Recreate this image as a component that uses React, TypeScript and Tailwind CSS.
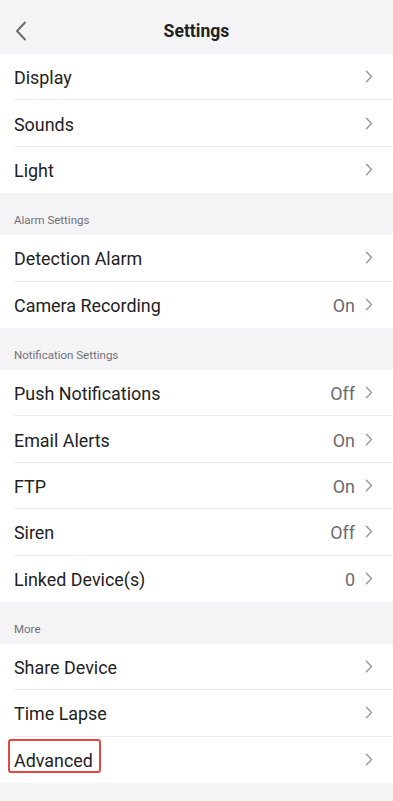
import React from "react";

type Row = { label: string; value?: string; highlight?: boolean };
type Section = { title?: string; rows: Row[] };

const SECTIONS: Section[] = [
  { rows: [{ label: "Display" }, { label: "Sounds" }, { label: "Light" }] },
  {
    title: "Alarm Settings",
    rows: [{ label: "Detection Alarm" }, { label: "Camera Recording", value: "On" }],
  },
  {
    title: "Notification Settings",
    rows: [
      { label: "Push Notifications", value: "Off" },
      { label: "Email Alerts", value: "On" },
      { label: "FTP", value: "On" },
      { label: "Siren", value: "Off" },
      { label: "Linked Device(s)", value: "0" },
    ],
  },
  {
    title: "More",
    rows: [{ label: "Share Device" }, { label: "Time Lapse" }, { label: "Advanced", highlight: true }],
  },
];

function Chevron() {
  return (
    <svg width="8" height="13" viewBox="0 0 8 13" fill="none" className="ml-[10px] -mt-[3px]">
      <path d="M1.5 1.2 L6.5 6.5 L1.5 11.8" stroke="#9a9a9f" strokeWidth="1.5" strokeLinecap="round" strokeLinejoin="round" />
    </svg>
  );
}

export default function App() {
  return (
    <div className="min-h-[801px] w-[393px] bg-[#f4f4f6] text-[#222] font-['Roboto','Liberation_Sans',sans-serif]">
      {/* Header */}
      <div className="relative h-[54px] flex items-center justify-center">
        <svg width="12" height="20" viewBox="0 0 12 20" fill="none" className="absolute left-[15px] top-[21px]">
          <path d="M10 1.5 L2 10 L10 18.5" stroke="#6b6b70" strokeWidth="2" strokeLinecap="round" strokeLinejoin="round" />
        </svg>
        <h1 className="text-[17.6px] font-bold text-[#222] pt-[9px]">Settings</h1>
      </div>

      {SECTIONS.map((section, si) => (
        <div key={si}>
          {section.title && (
            <div className="h-[42px] flex items-end pb-[6px] pl-[14px] text-[11.5px] text-[#707075]">
              {section.title}
            </div>
          )}
          <div className="bg-white">
            {section.rows.map((row, ri) => (
              <div key={row.label} className="pl-[14px]">
                <div
                  className={`h-[46.4px] flex items-center pr-[20px] pt-[3px] ${ri < section.rows.length - 1 ? "border-b border-[#ececee]" : ""}`}
                >
                  <span className="flex-1 text-[17.9px] leading-[24px] text-[#222]">
                    {row.highlight ? (
                      <span className="relative">
                        {row.label}
                        <span className="absolute -left-[6px] -right-[8px] -top-[11px] -bottom-[2px] border-2 border-[#e8473f] rounded-[3px]" />
                      </span>
                    ) : (
                      row.label
                    )}
                  </span>
                  {row.value && <span className="text-[17.9px] leading-[24px] text-[#6a6a6f]">{row.value}</span>}
                  <Chevron />
                </div>
              </div>
            ))}
          </div>
        </div>
      ))}
    </div>
  );
}
